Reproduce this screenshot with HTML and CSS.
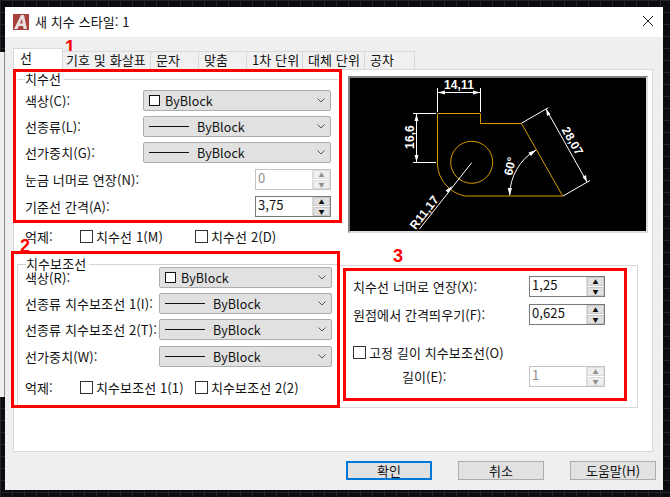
FILE: index.html
```html
<!DOCTYPE html>
<html lang="ko">
<head>
  <meta charset="UTF-8">
  <meta name="viewport" content="width=device-width, initial-scale=1.0">
  <title>새 치수 스타일</title>
  <link rel="stylesheet" href="styles.css">
</head>
<body>
  <div class="side-strip"></div>
  <div class="dialog">
    <div class="titlebar">
      <svg class="app-logo" viewBox="0 0 16 16"><rect width="16" height="16" fill="#a8403c"/><path d="M1 15 L8 1 H11 L14 15 H10.5 L10 12 H6 L4.5 15 Z M7 9.5 H9.6 L9 5 Z" fill="#e8e0e0" fill-rule="evenodd"/></svg>
      <span class="title-text">새 치수 스타일: 1</span>
      <svg class="close-x" viewBox="0 0 10 10"><path d="M0 0 L10 10 M10 0 L0 10" stroke="#222" stroke-width="1" fill="none"/></svg>
    </div>

    <div class="tabs">
      <div class="tab active">선</div>
      <div class="tab tab-symbol">기호 및 화살표</div>
      <div class="tab">문자</div>
      <div class="tab">맞춤</div>
      <div class="tab tab-unit">1차 단위</div>
      <div class="tab tab-alt">대체 단위</div>
      <div class="tab tab-tol">공차</div>
    </div>

    <div class="panel">
      <div class="col-left">
        <fieldset class="group group-dim">
          <legend>치수선</legend>
          <div class="row"><label>색상(C):</label><div class="select sel-wide"><i class="swatch"></i>ByBlock<svg class="chev" viewBox="0 0 8 5"><path d="M0.5 0.5 L4 4 L7.5 0.5" /></svg></div></div>
          <div class="row"><label>선종류(L):</label><div class="select sel-wide"><i class="dash"></i>ByBlock<svg class="chev" viewBox="0 0 8 5"><path d="M0.5 0.5 L4 4 L7.5 0.5" /></svg></div></div>
          <div class="row"><label>선가중치(G):</label><div class="select sel-wide"><i class="dash"></i>ByBlock<svg class="chev" viewBox="0 0 8 5"><path d="M0.5 0.5 L4 4 L7.5 0.5" /></svg></div></div>
          <div class="row row-spin row-tick"><label>눈금 너머로 연장(N):</label><div class="spin disabled"><span class="val">0</span><span class="btns"><b>▲</b><b>▼</b></span></div></div>
          <div class="row row-spin"><label>기준선 간격(A):</label><div class="spin"><span class="val">3,75</span><span class="btns"><b>▲</b><b>▼</b></span></div></div>
        </fieldset>
        <div class="checks checks-dim">
          <span class="checks-label">억제:</span>
          <span class="check"><i class="box"></i>치수선 1(M)</span>
          <span class="check"><i class="box"></i>치수선 2(D)</span>
        </div>
        <fieldset class="group group-ext">
          <legend>치수보조선</legend>
          <div class="row ext-1"><label>색상(R):</label><div class="select sel-narrow"><i class="swatch"></i>ByBlock<svg class="chev" viewBox="0 0 8 5"><path d="M0.5 0.5 L4 4 L7.5 0.5" /></svg></div></div>
          <div class="row ext-2"><label>선종류 치수보조선 1(I):</label><div class="select sel-narrow"><i class="dash"></i>ByBlock<svg class="chev" viewBox="0 0 8 5"><path d="M0.5 0.5 L4 4 L7.5 0.5" /></svg></div></div>
          <div class="row"><label>선종류 치수보조선 2(T):</label><div class="select sel-narrow"><i class="dash"></i>ByBlock<svg class="chev" viewBox="0 0 8 5"><path d="M0.5 0.5 L4 4 L7.5 0.5" /></svg></div></div>
          <div class="row"><label>선가중치(W):</label><div class="select sel-narrow"><i class="dash"></i>ByBlock<svg class="chev" viewBox="0 0 8 5"><path d="M0.5 0.5 L4 4 L7.5 0.5" /></svg></div></div>
          <div class="checks checks-ext">
            <span class="checks-label">억제:</span>
            <span class="check"><i class="box"></i>치수보조선 1(1)</span>
            <span class="check"><i class="box"></i>치수보조선 2(2)</span>
          </div>
        </fieldset>
      </div>

      <div class="col-right">
        <svg class="preview" viewBox="350 78 296 153">
          <rect x="350" y="78" width="296" height="153" fill="#000"/>
          <g fill="none" stroke="#d99a00" stroke-width="1">
            <path d="M437.5 165 V113.5 H480.5 V123.5 H521.5 L562.7 196 H465 A34 34 0 0 1 437.5 165"/>
            <circle cx="471.7" cy="162.3" r="21"/>
          </g>
          <g fill="none" stroke="#fff" stroke-width="1">
            <path d="M437.5 112 V88 M480.5 112 V88 M438 92.5 H480"/>
            <path d="M413 113.5 H436 M413 162.5 H436 M416.5 114 V162"/>
            <path d="M521.3 123.3 L548.3 107.7 M563 196 L590 180.5 M546 109 L587 182"/>
            <path d="M509.7 195 A53 53 0 0 1 536 150"/>
            <path d="M471.7 162.7 L419.3 229.3"/>
          </g>
          <g fill="#fff">
            <path d="M438 92.5 L445 90.5 V94.5 Z M480 92.5 L473 90.5 V94.5 Z"/>
            <path d="M416.5 114 L414.5 121 H418.5 Z M416.5 162 L414.5 155 H418.5 Z"/>
            <path d="M546 109 L547 116 L550.5 114 Z M587 182 L586 175 L582.5 177 Z"/>
            <path d="M509.7 196 L507.7 188 H512 Z M536 150 L528.5 152.5 L531 156 Z"/>
            <path d="M452 186 L445.5 190.5 L448.5 193 Z"/>
          </g>
          <g class="dim-text">
            <text x="459" y="89" text-anchor="middle">14,11</text>
            <text transform="translate(414 137) rotate(-90)" text-anchor="middle">16,6</text>
            <text transform="translate(569 143) rotate(60)" text-anchor="middle">28,07</text>
            <text transform="translate(514 167) rotate(-78)" text-anchor="middle">60°</text>
            <text transform="translate(427.5 215) rotate(-52)" text-anchor="middle">R11,17</text>
          </g>
        </svg>
        <div class="group-offset">
          <div class="row row-offset"><label>치수선 너머로 연장(X):</label><div class="spin"><span class="val">1,25</span><span class="btns"><b>▲</b><b>▼</b></span></div></div>
          <div class="row row-offset"><label>원점에서 간격띄우기(F):</label><div class="spin"><span class="val">0,625</span><span class="btns"><b>▲</b><b>▼</b></span></div></div>
          <div class="check check-fixed"><i class="box"></i>고정 길이 치수보조선(O)</div>
          <div class="row row-offset row-len"><label>길이(E):</label><div class="spin disabled"><span class="val">1</span><span class="btns"><b>▲</b><b>▼</b></span></div></div>
        </div>
      </div>
    </div>

    <div class="actions">
      <button class="btn default">확인</button>
      <button class="btn">취소</button>
      <button class="btn">도움말(H)</button>
    </div>
  </div>

  <!-- 빨간 표시 -->
  <div class="mark mark-1"></div>
  <div class="mark mark-2"></div>
  <div class="mark mark-3"></div>
  <span class="num num-1">1</span>
  <span class="num num-2">2</span>
  <span class="num num-3">3</span>
</body>
</html>
```

FILE: styles.css
```css
html, body {
  margin: 0;
  height: 497px;
  overflow: hidden;
}

body {
  position: relative;
  font-family: "Noto Sans CJK KR", "DejaVu Sans", sans-serif;
  font-size: 13px;
  letter-spacing: 0.1px;
  color: #111;
  background-color: #0c0c10;
  background-image:
    linear-gradient(to right, #23242a 1px, transparent 1px),
    linear-gradient(to bottom, #23242a 1px, transparent 1px);
  background-size: 12px 12px;
}

.side-strip {
  position: absolute;
  left: 0;
  top: 52px;
  box-sizing: border-box;
  width: 5px;
  height: 345px;
  background: #efefef;
  border-right: 1px solid #8a8a8a;
}

.dialog {
  position: absolute;
  left: 5px;
  top: 7px;
  width: 658px;
  height: 483px;
  background: #efefef;
}

.titlebar {
  height: 30px;
  background: #fff;
  display: flex;
  align-items: center;
  padding: 0 8px;
}

.app-logo {
  width: 16px;
  height: 16px;
  margin-right: 6px;
}

.title-text {
  flex: 1;
  margin-top: -1px;
}

.close-x {
  width: 10px;
  height: 10px;
  margin: 0 2px 2px 0;
}

.tabs {
  display: flex;
  height: 18px;
  margin: 14px 0 0 8px;
  align-items: flex-end;
  position: relative;
  z-index: 1;
}

.tab {
  box-sizing: border-box;
  width: 48px;
  height: 18px;
  padding-left: 5px;
  line-height: 15px;
  background: #f0f0f0;
  border: 1px solid #d9d9d9;
  border-left: none;
  border-bottom: none;
  white-space: nowrap;
}

.tab.active {
  width: 50px;
  height: 21px;
  padding-left: 6px;
  line-height: 18px;
  background: #fff;
  border-left: 1px solid #d9d9d9;
}

.tab-symbol {
  width: 88px;
  padding-left: 3px;
}

.tab-unit {
  width: 56px;
}

.tab-alt {
  width: 62px;
}

.tab-tol {
  width: 50px;
}

.panel {
  box-sizing: border-box;
  margin-left: 8px;
  width: 640px;
  height: 383px;
  background: #fff;
  border: 1px solid #d9d9d9;
  display: flex;
}

.col-left {
  width: 330px;
  padding: 2px 0 0 3px;
  box-sizing: border-box;
}

.col-right {
  flex: 1;
}

.group {
  margin: 0;
  padding: 0;
  border: none;
  border-top: 1px solid #d4d4d4;
  min-width: 0;
}

.group legend {
  margin-left: 8px;
  padding: 0 3px 0 0;
  line-height: 14px;
}

.group-dim {
  width: 321px;
  padding: 1px 7px 0 0;
  box-sizing: border-box;
}

.group-ext {
  box-sizing: border-box;
  width: 321px;
  height: 148px;
  margin-top: 6px;
  padding-right: 6px;
  border-left: 1px solid #d4d4d4;
}

.row {
  display: flex;
  align-items: center;
  justify-content: space-between;
  height: 26px;
  padding-left: 8px;
}

.group-ext .row {
  height: 27px;
  padding-left: 7px;
}

.group-ext .ext-1 {
  height: 25px;
  margin-top: -6px;
}

.group-ext .ext-2 {
  height: 26px;
}

.row label {
  white-space: nowrap;
}

.select {
  box-sizing: border-box;
  height: 21px;
  display: flex;
  align-items: center;
  position: relative;
  font-size: 12.5px;
  background: #e1e1e1;
  border: 1px solid #adadad;
  border-radius: 2px;
  padding-left: 5px;
}

.sel-wide {
  width: 188px;
}

.sel-narrow {
  width: 173px;
}

.swatch {
  width: 9px;
  height: 9px;
  border: 1px solid #111;
  background: #fff;
  margin-right: 5px;
}

.dash {
  width: 40px;
  height: 1px;
  background: #111;
  margin-right: 8px;
}

.chev {
  position: absolute;
  right: 5px;
  top: 7px;
  width: 8px;
  height: 5px;
  fill: none;
  stroke: #555;
  stroke-width: 1;
}

.spin {
  box-sizing: border-box;
  width: 76px;
  height: 21px;
  display: flex;
  background: #fff;
  border: 1px solid #7a7a7a;
}

.spin .val {
  flex: 1;
  padding-left: 2px;
  line-height: 16px;
}

.spin .btns {
  width: 17px;
  display: flex;
  flex-direction: column;
  background: #fff;
  border-left: 1px solid #ddd;
}

.spin .btns b {
  flex: 1;
  margin: 0 0 1px;
  background: #e1e1e1;
  border: 1px solid #c8c8c8;
  font-size: 6px;
  font-weight: normal;
  line-height: 7px;
  text-align: center;
}

.spin.disabled {
  border-color: #c4c4c4;
  color: #8f8f8f;
}

.spin.disabled .btns b {
  background: #efefef;
  border-color: #ddd;
}

.row-spin {
  height: 27px;
}

.row-tick {
  margin-top: 1px;
}

.checks {
  display: flex;
  align-items: center;
  height: 30px;
  padding-left: 8px;
}

.checks-dim {
  margin-top: 1px;
}

.checks-ext {
  margin-top: 2px;
  padding-left: 7px;
}

.checks-label {
  width: 55px;
}

.check {
  display: flex;
  align-items: center;
  width: 115px;
  white-space: nowrap;
}

.box {
  box-sizing: border-box;
  width: 13px;
  height: 13px;
  border: 1px solid #333;
  background: #fff;
  margin-right: 3px;
}

.preview {
  display: block;
  box-sizing: border-box;
  width: 300px;
  height: 157px;
  margin: 6px 0 0 4px;
  border: solid 2px;
  border-color: #808080 #ddd #ddd #808080;
}

.group-offset {
  box-sizing: border-box;
  width: 298px;
  height: 143px;
  margin: 32px 0 0 -4px;
  padding: 6px 32px 0 13px;
  border: 1px solid #d9d9d9;
  border-left: none;
}

.row-offset {
  padding: 0;
  height: 28px;
}

.check-fixed {
  width: auto;
  margin-top: 15px;
  height: 18px;
}

.row-len {
  margin-top: 1px;
  padding-left: 49px;
}

.dim-text text {
  font-family: "Liberation Sans", sans-serif;
  font-size: 12px;
  font-weight: bold;
  fill: #fff;
}

.actions {
  display: flex;
  padding: 9px 0 0 341px;
  gap: 26px;
}

.btn {
  width: 86px;
  height: 19px;
  padding: 0;
  font: inherit;
  line-height: 15px;
  color: #111;
  background: #e1e1e1;
  border: 1px solid #adadad;
}

.btn.default {
  border: 2px solid #0078d7;
}

.mark {
  position: absolute;
  box-sizing: border-box;
  border: 3px solid #f00;
}

.mark-1 {
  left: 13px;
  top: 69px;
  width: 329px;
  height: 154px;
}

.mark-2 {
  left: 11px;
  top: 251px;
  width: 329px;
  height: 157px;
}

.mark-3 {
  left: 343px;
  top: 268px;
  width: 284px;
  height: 133px;
}

.num {
  position: absolute;
  font-family: "Liberation Sans", sans-serif;
  font-size: 18px;
  font-weight: bold;
  line-height: 18px;
  color: #f00;
}

.num-1 { left: 65px; top: 38px; }
.num-2 { left: 20px; top: 237px; }
.num-3 { left: 393px; top: 247px; }
```
